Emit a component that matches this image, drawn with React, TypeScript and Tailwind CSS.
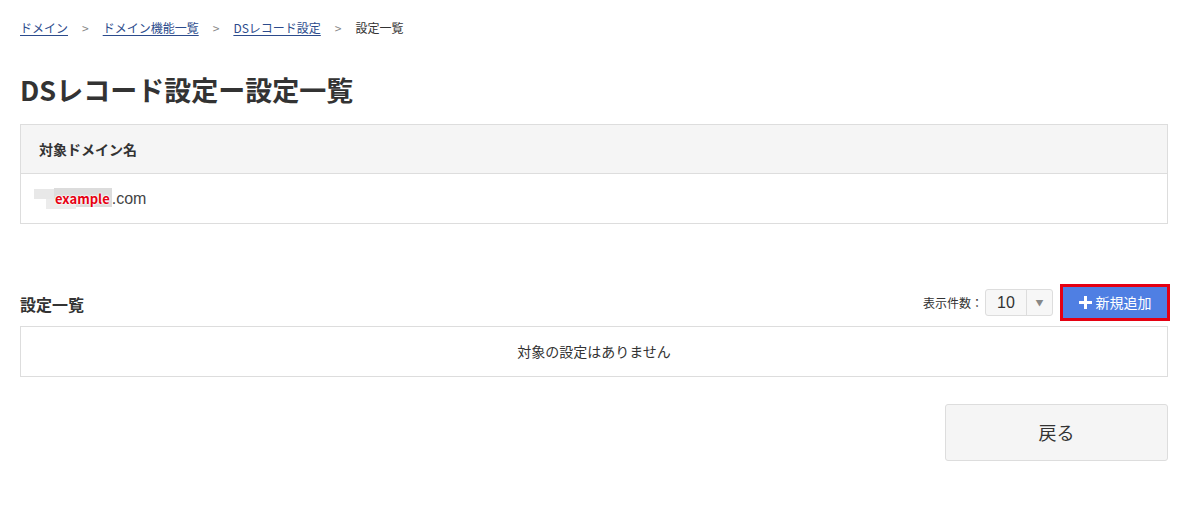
import React from "react"

const font = { fontFamily: '"Noto Sans CJK JP", "Noto Sans", sans-serif' }

const Crumb = ({ label, link }: { label: string; link?: boolean }) =>
  link ? (
    <a className="text-[#2c4b8c] underline underline-offset-2">{label}</a>
  ) : (
    <span className="text-[#333]">{label}</span>
  )

const Sep = () => <span className="mx-[14px] text-[#888]">&gt;</span>

export default function App() {
  return (
    <div className="min-h-[505px] bg-white pl-5 pr-8 pt-[18px] text-[#333]" style={font}>
      <nav className="flex items-center text-[12px] leading-[20px]">
        <Crumb label="ドメイン" link />
        <Sep />
        <Crumb label="ドメイン機能一覧" link />
        <Sep />
        <Crumb label="DSレコード設定" link />
        <Sep />
        <Crumb label="設定一覧" />
      </nav>

      <h1 className="mt-[34px] text-[27px] font-bold leading-[36px] text-[#333]">DSレコード設定ー設定一覧</h1>

      <div className="mt-[16px] border border-[#dddddd]">
        <div className="flex h-[49px] items-center border-b border-[#dddddd] bg-[#f5f5f5] px-[18px] text-[14px] font-bold">
          対象ドメイン名
        </div>
        <div className="flex h-[49px] items-center px-[13px] text-[16px]">
          <span className="relative inline-flex h-[22px] items-center">
            <span className="absolute left-0 top-[1px] h-[10px] w-[22px] bg-[#e8e8e8]" />
            <span className="absolute left-[20px] top-[0px] h-[19px] w-[58px] bg-[#dcdcdc]" />
            <span className="absolute left-[12px] top-[11px] h-[10px] w-[30px] bg-[#ececec]" />
            <span
              className="relative ml-[21px] mr-[2px] text-[13px] font-bold leading-none text-[#e60012]"
              style={{ textShadow: "0 0 2px #fff, 0 0 2px #fff, 0 0 2px #fff" }}
            >
              example
            </span>
          </span>
          <span className="text-[#444]" style={{ fontFamily: '"Liberation Sans", sans-serif' }}>.com</span>
        </div>
      </div>

      <div className="mt-[60px] flex items-end justify-between">
        <h2 className="mb-[10px] text-[16px] font-bold leading-[24px]">設定一覧</h2>
        <div className="-mr-[2px] mb-[5px] flex items-center">
          <span className="text-[12px] text-[#333]">表示件数：</span>
          <div className="ml-[2px] flex h-[27px] w-[68px] items-center rounded-[3px] border border-[#dddddd] bg-[#f7f7f7]">
            <span className="flex w-[40px] justify-center text-[16px]" style={{ fontFamily: '"Liberation Sans", sans-serif' }}>10</span>
            <span className="flex h-full flex-1 items-center justify-center border-l border-[#dddddd] text-[8px] text-[#888]">▼</span>
          </div>
          <button className="ml-[7px] flex h-[37px] w-[110px] items-center justify-center border-[3px] border-[#e50012] bg-[#4f7fe3] text-[14px] text-white">
            <svg width="13" height="13" viewBox="0 0 13 13" className="mr-[4px]">
              <rect x="5" y="0" width="3" height="13" fill="#fff" />
              <rect x="0" y="5" width="13" height="3" fill="#fff" />
            </svg>
            新規追加
          </button>
        </div>
      </div>

      <div className="flex h-[51px] items-center justify-center border border-[#dddddd] text-[14px] text-[#333]">
        対象の設定はありません
      </div>

      <div className="mt-[27px] flex justify-end">
        <button className="h-[57px] w-[223px] rounded-[3px] border border-[#dddddd] bg-[#f5f5f5] text-[18px] text-[#333]">
          戻る
        </button>
      </div>
    </div>
  )
}
